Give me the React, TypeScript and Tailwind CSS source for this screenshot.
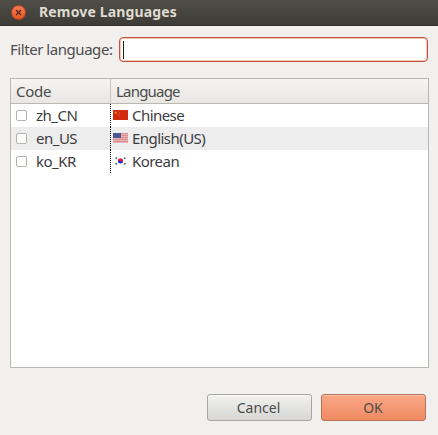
import React from "react";

function ChinaFlag() {
  return (
    <svg width="15" height="10" viewBox="0 0 15 10" className="block">
      <rect width="15" height="10" fill="#d2290f" />
      <path d="M1.500 2.800h2.400M2.700 1.600v2.400" stroke="#f08c1c" strokeWidth="1" />
      <path d="M5 1h1M6 2.5h1M6 4h1M5 5.3h1" stroke="#e2621a" strokeWidth="0.7" />
    </svg>
  );
}

function UsFlag() {
  return (
    <svg width="15" height="10" viewBox="0 0 15 10" className="block">
      <rect width="15" height="10" fill="#e9b3b4" />
      <path d="M0 .5h15M0 2.5h15M0 4.5h15M0 6.5h15M0 8.5h15" stroke="#dc8b8e" strokeWidth="1" />
      <rect width="8" height="5" fill="#4b5790" />
    </svg>
  );
}

function KoreaFlag() {
  return (
    <svg width="15" height="10" viewBox="0 0 15 10" className="block">
      <rect width="15" height="10" fill="#fff" />
      <circle cx="7.500" cy="5" r="2.500" fill="#1626dc" />
      <path d="M5 5a2.5 2.5 0 0 1 5 0c-.3 1-1.500 1-2.500.3C6.500 4.500 5.500 4.200 5 5z" fill="#f01820" />
      <path d="M2.600 2.800l1.300-1.200M11.100 1.600l1.300 1.200M2.600 7.200l1.300 1.200M11.100 8.400l1.300-1.200" stroke="#555" strokeWidth="1.500" />
    </svg>
  );
}

const rows = [
  { code: "zh_CN", name: "Chinese", Flag: ChinaFlag },
  { code: "en_US", name: "English(US)", Flag: UsFlag },
  { code: "ko_KR", name: "Korean", Flag: KoreaFlag },
];

export default function App() {
  return (
    <div className="flex h-[435px] w-[438px] flex-col overflow-hidden bg-[#f1f0ee] font-['Noto_Sans',sans-serif] text-[15px] leading-none text-[#4c4c4c]">
      <header className="flex h-[26px] shrink-0 items-center border-b border-[#34322e] bg-linear-to-b from-[#504e47] to-[#3d3b36] pb-px pl-[11px]">
        <button aria-label="Close" className="flex size-[15px] items-center justify-center rounded-full border border-[#b5451f] bg-linear-to-b from-[#f57c50] to-[#e95420]">
          <svg width="7" height="7" viewBox="0 0 7 7">
            <path d="M1 1l5 5M6 1L1 6" stroke="#51291b" strokeWidth="1.200" />
          </svg>
        </button>
        <h1 className="ml-[13px] whitespace-nowrap text-[14px] font-bold leading-[20px] tracking-[0.15px] text-[#dfdbd2]">Remove Languages</h1>
      </header>

      <div className="mt-[11px] flex h-[25px] shrink-0 items-center pl-[10px]">
        <label className="w-[109px] whitespace-nowrap pb-px leading-[20px] tracking-[-0.45px]">Filter language:</label>
        <div className="flex h-[25px] w-[309px] items-center rounded-[4px] border border-[#c0543f] bg-white pl-[3px] shadow-[inset_0_0_0_1px_#f6c5b4]">
          <span className="h-[18px] w-px bg-[#222]" />
        </div>
      </div>

      <div className="ml-[10px] mt-[16px] flex h-[290px] w-[419px] shrink-0 flex-col border border-[#bab6b1] bg-white">
        <div className="flex h-[25px] shrink-0 border-b border-[#bbb8b2] bg-linear-to-b from-[#f5f4f2] to-[#e8e7e3] leading-[25px]">
          <div className="w-[100px] border-r border-[#cac7c2] pl-[5px] tracking-[-0.3px]">Code</div>
          <div className="pl-[5px] tracking-[-0.8px]">Language</div>
        </div>
        {rows.map(({ code, name, Flag }, i) => (
          <div key={code} className={`flex h-[23px] shrink-0 items-center ${i === 1 ? "bg-[#ededed]" : "bg-white"}`}>
            <div className="flex h-full w-[100px] items-center border-r border-dotted border-black pl-[5px]">
              <span className="size-[11px] rounded-[2px] border border-[#b5b1ac] bg-white" />
              <span className="ml-[9px] leading-[23px] tracking-[-0.5px] text-[#3c3c3c]">{code}</span>
            </div>
            <div className="flex items-center pl-[2px]">
              <span className="pb-[2px]">
                <Flag />
              </span>
              <span className="ml-[4px] leading-[23px] tracking-[-0.55px] text-[#3c3c3c]">{name}</span>
            </div>
          </div>
        ))}
      </div>

      <div className="ml-[207px] mt-[26px] flex gap-[9px]">
        <button className="h-[27px] w-[105px] rounded-[3px] border border-[#a8a5a0] bg-linear-to-b from-[#f2f2f1] to-[#d6d6d5] pr-[2px] text-[14px] shadow-[inset_0_1px_0_#fafafa]">Cancel</button>
        <button className="h-[27px] w-[105px] rounded-[3px] border border-[#b4745a] bg-linear-to-b from-[#f9a886] to-[#f08a62] pr-px text-[14px] shadow-[inset_0_1px_0_#fbc0a6]">OK</button>
      </div>
    </div>
  );
}
